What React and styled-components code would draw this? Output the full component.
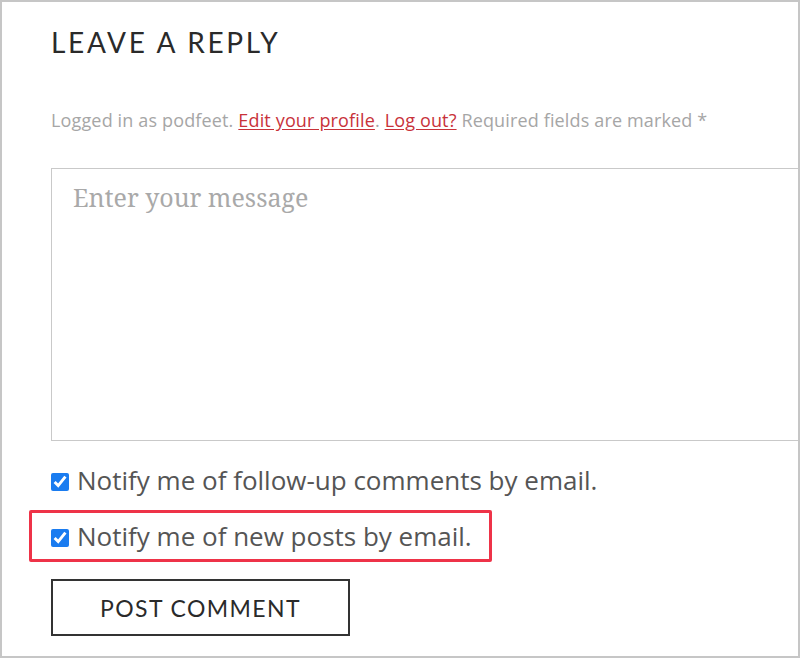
import styled, { createGlobalStyle } from 'styled-components';

const Global = createGlobalStyle`
  html, body { margin: 0; padding: 0; background: #fff; }
  * { box-sizing: border-box; }
`;

export default function App() {
    return (
        <>
            <Global />
            <Frame>
                <Title>LEAVE A REPLY</Title>
                <LoggedIn>
                    Logged in as podfeet. <a href="#p">Edit your profile</a>. <a href="#o">Log out?</a> Required fields are marked *
                </LoggedIn>
                <Message placeholder="Enter your message" />
                <Options>
                    <Check>
                        <input type="checkbox" defaultChecked />
                        <span>Notify me of follow-up comments by email.</span>
                    </Check>
                    <Highlight>
                        <Check>
                            <input type="checkbox" defaultChecked />
                            <span>Notify me of new posts by email.</span>
                        </Check>
                    </Highlight>
                </Options>
                <Submit>POST COMMENT</Submit>
            </Frame>
        </>
    )
}

const Frame = styled.div`
    height: 658px;
    border: 2px solid #c6c6c6;
    overflow: hidden;
    padding: 23px 0 0 49px;
    display: flex;
    flex-direction: column;
    align-items: flex-start;
`

const Title = styled.h2`
    margin: 0;
    font-family: Lato, sans-serif;
    font-weight: 400;
    font-size: 28px;
    line-height: 34px;
    letter-spacing: 2.7px;
    color: #2a2a2a;
`

const LoggedIn = styled.p`
    margin: 49px 0 0;
    font-family: "Open Sans", sans-serif;
    font-size: 18px;
    line-height: 24px;
    letter-spacing: 0.15px;
    color: #a6a6a6;

    a {
        color: #c8323a;
        text-decoration: underline;
        text-underline-offset: 2px;
    }
`

const Message = styled.textarea`
    margin-top: 36px;
    width: 800px;
    height: 273px;
    border: 1px solid #c9c9c9;
    padding: 11px 21px;
    resize: none;
    font-family: "Noto Serif", "DejaVu Serif", serif;
    font-size: 25px;
    outline: none;

    &::placeholder {
        color: #a9a9a9;
    }
`

const Options = styled.div`
    margin-top: 20px;
    display: flex;
    flex-direction: column;
    align-items: flex-start;
    gap: 11px;
`

const Check = styled.label`
    display: flex;
    align-items: center;
    gap: 8px;
    font-family: "Open Sans", sans-serif;
    font-size: 26px;
    line-height: 38px;
    color: #555;

    input {
        margin: 0;
        width: 18px;
        height: 18px;
        accent-color: #1a7cf0;
        margin-top: 3px;
    }
`

const Highlight = styled.div`
    margin-left: -22px;
    padding: 4px 17px 4px 19px;
    border: 3px solid #ee3348;
    border-radius: 2px;
`

const Submit = styled.button`
    margin-top: 17px;
    width: 299px;
    height: 57px;
    border: 2px solid #333;
    background: #fff;
    font-family: Lato, sans-serif;
    font-size: 23px;
    letter-spacing: 1.4px;
    color: #2a2a2a;
`
